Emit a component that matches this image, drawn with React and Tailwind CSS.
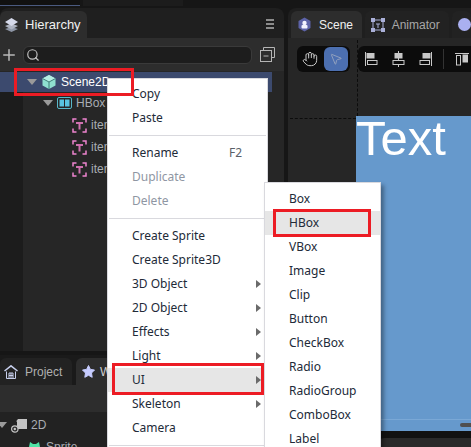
import React from 'react';
import { Hand, MousePointer2, Search, Plus } from 'lucide-react';

const uiFont = { fontFamily: '"Noto Sans", "Liberation Sans", sans-serif' };
const panelFont = { fontFamily: '"Liberation Sans", sans-serif' };

function Caret({ className = '' }) {
  return (
    <svg width="10" height="6" viewBox="0 0 10 6" className={`shrink-0 ${className}`}>
      <path d="M0 0h10L5 6z" fill="#9a9a9a" />
    </svg>
  );
}

function LayersIcon() {
  return (
    <svg width="15" height="15" viewBox="0 0 15 15">
      <path d="M7.5 10L14 12 7.5 15 1 12z" fill="#8d95a5" />
      <path d="M7.5 6.5L14 9 7.5 12.5 1 9z" fill="#aeb4c2" />
      <path d="M7.5 1L14 5 7.5 9 1 5z" fill="#d5d9ea" />
    </svg>
  );
}

function CubeIcon() {
  return (
    <svg width="16" height="16" viewBox="0 0 16 16">
      <path d="M8 1l6.500 3.500v7L8 15l-6.500-3.500v-7z" fill="#8fe0d0" />
      <path d="M8 8L1.500 4.500 8 1l6.500 3.500z" fill="#b6f0e4" />
      <path d="M8 8v7M8 8L1.500 4.500M8 8l6.500-3.500" stroke="#3f7f78" strokeWidth="1" fill="none" />
    </svg>
  );
}

function HBoxIcon() {
  return (
    <svg width="15" height="12" viewBox="0 0 15 12">
      <rect x="0.500" y="0.500" width="14" height="11" rx="1.500" fill="none" stroke="#58b7c9" />
      <rect x="2.500" y="2.500" width="4.500" height="7" fill="#58c4e0" />
      <rect x="8" y="2.500" width="4.500" height="7" fill="#58c4e0" />
    </svg>
  );
}

function TextItemIcon() {
  return (
    <svg width="15" height="15" viewBox="0 0 15 15" fill="none" stroke="#ee84cf" strokeWidth="1.500">
      <path d="M1 4.500V1h3.500M10.500 1H14v3.500M1 10.500V14h3.500M10.500 14H14v-3.500" />
      <path d="M4 5h7M7.500 5v6.500" strokeWidth="2" stroke="#d070b0" />
    </svg>
  );
}

function SceneTabIcon() {
  return (
    <svg width="15" height="15" viewBox="0 0 15 15">
      <path d="M7.500 0.500l6 3.500v7l-6 3.500-6-3.500v-7z" fill="#5d63a8" />
      <circle cx="7.500" cy="6" r="2.200" fill="#f2f2ff" />
      <rect x="4.500" y="8" width="6" height="3.500" rx="1" fill="#f2f2ff" />
    </svg>
  );
}

function AnimatorIcon() {
  return (
    <svg width="14" height="14" viewBox="0 0 14 14" fill="none" stroke="#aab0d8">
      <rect x="0.500" y="0.500" width="3" height="3" fill="#aab0d8" />
      <rect x="10.500" y="0.500" width="3" height="3" fill="#aab0d8" />
      <rect x="0.500" y="10.500" width="3" height="3" fill="#aab0d8" />
      <rect x="10.500" y="10.500" width="3" height="3" fill="#aab0d8" />
      <path d="M3.500 2h7M3.500 12h7M2 3.500v7M12 3.500v7M5 6h4M7 6v4" />
    </svg>
  );
}

function HomeIcon() {
  return (
    <svg width="14" height="14" viewBox="0 0 14 14" fill="none" stroke="#c8d0ee">
      <path d="M0.500 6L7 0.800 13.500 6" strokeWidth="1.500" />
      <path d="M2.500 6.500v7h9v-7" />
      <path d="M5 8h4v5.500H5zM7 8v5.500M5 10.500h4" />
    </svg>
  );
}

function StarIcon() {
  return (
    <svg width="13" height="13" viewBox="0 0 13 13">
      <path d="M6.500 0.500l1.900 3.900 4.100.6-3 3 .7 4.300-3.700-2-3.700 2 .7-4.300-3-3 4.100-.6z" fill="#c6ccff" strokeLinejoin="round" stroke="#c6ccff" />
    </svg>
  );
}

function FolderIcon() {
  return (
    <svg width="16" height="16" viewBox="0 0 16 16">
      <path d="M5 4.500L7 2h9v10H6V4.500z" fill="#c4c4c4" />
      <circle cx="3.800" cy="12" r="3.200" fill="#2a2a2a" stroke="#c4c4c4" strokeWidth="1.200" />
      <circle cx="3.800" cy="12" r="1.200" fill="#c4c4c4" />
    </svg>
  );
}

function SpriteIcon() {
  return (
    <svg width="15" height="12" viewBox="0 0 15 12">
      <path d="M1 11L3 1l3 2h3l3-2 2 10z" fill="#4fe3a5" />
    </svg>
  );
}

function CollapseIcon() {
  return (
    <svg width="15" height="15" viewBox="0 0 15 15" fill="none" stroke="#b5b5b5">
      <path d="M3.500 3.500v-3h11v10h-3" />
      <rect x="0.500" y="3.500" width="11" height="11" />
      <path d="M3.500 9h5" />
    </svg>
  );
}

function PanelMenuIcon() {
  return (
    <svg width="8" height="10" viewBox="0 0 8 10" fill="#8c8c8c">
      <rect width="8" height="2" />
      <rect y="4" width="8" height="2" />
      <rect y="8" width="8" height="2" />
    </svg>
  );
}

// alignment buttons in the scene toolbar
function AlignLeft() {
  return (
    <svg width="13" height="14" viewBox="0 0 13 14" fill="none" stroke="#c8c8c8">
      <path d="M0.500 0v14" />
      <rect x="2" y="1.500" width="7" height="4.500" fill="#c8c8c8" />
      <rect x="2.500" y="8.500" width="9.500" height="4" />
    </svg>
  );
}

function AlignCenter() {
  return (
    <svg width="13" height="16" viewBox="0 0 13 16" fill="none" stroke="#c8c8c8">
      <path d="M6.500 0v16" />
      <rect x="3" y="2.500" width="7" height="4.500" fill="#c8c8c8" />
      <rect x="1" y="9.500" width="11" height="4" fill="#0c0c0c" />
    </svg>
  );
}

function AlignRight() {
  return (
    <svg width="13" height="14" viewBox="0 0 13 14" fill="none" stroke="#c8c8c8">
      <path d="M12.500 0v14" />
      <rect x="4" y="1.500" width="7" height="4.500" fill="#c8c8c8" />
      <rect x="1" y="8.500" width="9.500" height="4" />
    </svg>
  );
}

function AlignTop() {
  return (
    <svg width="14" height="13" viewBox="0 0 14 13" fill="none" stroke="#c8c8c8">
      <path d="M0 0.500h14" />
      <rect x="1.500" y="2.500" width="4" height="9.500" />
      <rect x="8" y="2" width="4.500" height="7" fill="#c8c8c8" />
    </svg>
  );
}

function TreeRow({ icon, label, caret, className = '' }) {
  return (
    <div className={`flex h-[22px] shrink-0 items-center ${className}`} style={panelFont}>
      {caret && <Caret className="mr-[4px]" />}
      {icon}
      <span className="ml-[4px] text-[12px] text-[#a9adb3]">{label}</span>
    </div>
  );
}

function HierarchyPanel() {
  return (
    <div className="flex h-[343px] shrink-0 flex-col overflow-hidden rounded-t-lg bg-[#1f1f1f]" style={panelFont}>
      <div className="flex h-[30px] shrink-0 items-end">
        <div className="flex h-[27px] w-[87px] items-center gap-[6px] rounded-t-md bg-[#2d2d2d] pl-[4px]">
          <LayersIcon />
          <span className="text-[13px] text-[#f0f0f0]">Hierarchy</span>
        </div>
        <div className="mb-[9px] ml-auto mr-[10px]">
          <PanelMenuIcon />
        </div>
      </div>
      <div className="flex h-[33px] shrink-0 items-center bg-[#2d2d2d] pr-[9px]">
        <Plus size={18} color="#b8b8b8" strokeWidth={2} />
        <div className="ml-[5px] flex h-[18px] w-[229px] items-center rounded-md border border-[#3a3a3a] bg-[#1d1d1d] pl-[2px]">
          <Search size={14} color="#c4c4c4" strokeWidth={2} />
        </div>
        <div className="ml-auto">
          <CollapseIcon />
        </div>
      </div>
      <div className="flex min-h-0 flex-1 flex-col bg-[#262626]">
        <div className="mt-px flex h-[20px] w-[272px] shrink-0 items-center bg-[#3c4a6e] pl-[27px]">
          <Caret className="mr-[4px]" />
          <CubeIcon />
          <span className="ml-[4px] text-[12px] text-white">Scene2D</span>
        </div>
        <div className="flex flex-1">
          <div className="w-[23px] bg-[#1c1c1c]" />
          <div className="flex-1">
            <TreeRow caret icon={<HBoxIcon />} label="HBox" className="pl-[20px]" />
            <TreeRow icon={<TextItemIcon />} label="item0" className="pl-[49px]" />
            <TreeRow icon={<TextItemIcon />} label="item1" className="pl-[49px]" />
            <TreeRow icon={<TextItemIcon />} label="item2" className="pl-[49px]" />
          </div>
        </div>
      </div>
    </div>
  );
}

function WidgetsPanel() {
  return (
    <div className="mt-[4px] flex min-h-0 flex-1 flex-col overflow-hidden bg-[#1a1a1a]" style={panelFont}>
      <div className="flex h-[30px] shrink-0 items-end gap-[4px]">
        <div className="flex h-[27px] w-[72px] items-center gap-[7px] rounded-t-md bg-[#222222] pl-[4px]">
          <HomeIcon />
          <span className="text-[12px] text-[#b0b0b0]">Project</span>
        </div>
        <div className="flex h-[27px] flex-1 items-center gap-[5px] rounded-t-md bg-[#2d2d2d] pl-[6px]">
          <StarIcon />
          <span className="text-[12px] text-[#d0d0d0]">Widgets</span>
        </div>
      </div>
      <div className="h-[27px] shrink-0 bg-[#2d2d2d]" />
      <div className="min-h-0 flex-1 overflow-hidden bg-[#222222]">
        <TreeRow caret icon={<FolderIcon />} label="2D" className="-ml-[3px] mt-[2px]" />
        <TreeRow icon={<SpriteIcon />} label="Sprite" className="pl-[27px]" />
      </div>
    </div>
  );
}

function SceneTab({ icon, label, active, className = '' }) {
  return (
    <div
      className={`flex h-[27px] items-center gap-[7px] rounded-t-md pl-[6px] ${active ? 'bg-[#2d2d2d]' : 'bg-[#222222]'} ${className}`}
    >
      {icon}
      {label && <span className={`text-[12px] ${active ? 'text-[#f0f0f0]' : 'text-[#a8a8a8]'}`}>{label}</span>}
    </div>
  );
}

function ScenePanel() {
  return (
    <div className="flex min-w-0 flex-1 flex-col overflow-hidden rounded-tl-lg bg-[#1f1f1f]" style={panelFont}>
      <div className="flex h-[30px] shrink-0 items-end gap-[3px] pl-[3px]">
        <SceneTab active icon={<SceneTabIcon />} label="Scene" className="w-[72px]" />
        <SceneTab icon={<AnimatorIcon />} label="Animator" className="w-[86px]" />
        <SceneTab
          icon={<div className="h-[13px] w-[13px] rounded-full bg-[#aab0f0]" />}
          className="flex-1"
        />
      </div>
      <div className="relative min-h-0 flex-1 bg-[#262626]">
        {/* toolbars */}
        <div className="flex gap-[8px] pl-[9px] pt-[8px]">
          <div className="flex h-[26px] w-[53px] items-center rounded-md bg-[#0c0c0c] pl-[5px]">
            <Hand size={16} color="#c8c8c8" strokeWidth={1.500} />
            <div className="ml-[6px] flex h-[24px] w-[24px] items-center justify-center rounded-md bg-[#4c6fb0]">
              <MousePointer2 size={14} color="#9aa7c0" strokeWidth={1.500} />
            </div>
          </div>
          <div className="flex h-[26px] flex-1 items-center rounded-l-md bg-[#0c0c0c] pl-[7px]">
            <AlignLeft />
            <div className="ml-[14px]"><AlignCenter /></div>
            <div className="ml-[14px]"><AlignRight /></div>
            <div className="ml-[11px] h-[20px] w-px bg-[#333333]" />
            <div className="ml-[11px]"><AlignTop /></div>
          </div>
        </div>

        {/* canvas */}
        <div className="absolute left-[69px] top-[2px] h-[76px] border-l border-dashed border-[#0c0c0c]" />
        <div className="absolute left-[2px] top-[80px] w-[66px] border-t border-dashed border-[#0c0c0c]" />
        <div className="absolute left-[68px] top-[78px] h-[315px] w-[115px] bg-[#6699cc] text-[49px] leading-[44px] text-white">
          Text
        </div>
        <div className="absolute left-[68px] top-[381px] h-px w-[115px] bg-[#7aa8d6]" />
        <div className="absolute left-[172px] top-[385px] h-[4px] w-[11px] rounded-l-full bg-[#4f4f4f]" />
        <div className="absolute bottom-0 left-0 h-[16px] w-full bg-[#111111]" />
        <div className="absolute -bottom-px left-[90px] h-[10px] w-[100px] rounded-t-md bg-[#2a2a2a]" />
      </div>
    </div>
  );
}

function MenuItem({ label, hint, arrow, disabled, hover, className = '' }) {
  return (
    <div
      className={`relative flex h-[24px] items-center pl-[24px] text-[12px] ${hover ? 'bg-[#e6e6e6]' : ''} ${disabled ? 'text-[#8f96a3]' : 'text-[#222a38]'} ${className}`}
    >
      {label}
      {hint && <span className="absolute right-[25px] text-[#5a5f68]">{hint}</span>}
      {arrow && (
        <svg width="5" height="8" viewBox="0 0 5 8" className="absolute right-[6px]">
          <path d="M0 0l5 4-5 4z" fill="#6a6a6a" />
        </svg>
      )}
    </div>
  );
}

function Separator() {
  return (
    <div className="flex h-[11px] items-center px-px">
      <div className="h-px w-full bg-[#d9d9de]" />
    </div>
  );
}

function ContextMenu() {
  return (
    <div className="absolute left-[107px] top-[78px] w-[161px] border border-[#d9d9de] bg-white pb-[8px] pt-[3px]">
      <MenuItem label="Copy" />
      <MenuItem label="Paste" />
      <Separator />
      <MenuItem label="Rename" hint="F2" />
      <MenuItem label="Duplicate" disabled />
      <MenuItem label="Delete" disabled />
      <Separator />
      <MenuItem label="Create Sprite" />
      <MenuItem label="Create Sprite3D" />
      <MenuItem label="3D Object" arrow />
      <MenuItem label="2D Object" arrow />
      <MenuItem label="Effects" arrow />
      <MenuItem label="Light" arrow />
      <MenuItem label="UI" arrow hover />
      <MenuItem label="Skeleton" arrow />
      <MenuItem label="Camera" />
      <Separator />
    </div>
  );
}

function SubMenu() {
  const items = ['Box', 'HBox', 'VBox', 'Image', 'Clip', 'Button', 'CheckBox', 'Radio', 'RadioGroup', 'ComboBox', 'Label'];
  return (
    <div className="absolute left-[264px] top-[182px] w-[117px] border border-[#d9d9de] bg-white pb-[8px] pt-[4px] shadow-[3px_3px_4px_rgba(0,0,0,0.35)]">
      {items.map((name) => (
        <MenuItem key={name} label={name} hover={name === 'HBox'} />
      ))}
    </div>
  );
}

export default function App() {
  return (
    <div className="relative h-[447px] w-[471px] overflow-hidden bg-[#161616]" style={uiFont}>
      <div className="flex h-[8px] gap-[3px]">
        <div className="h-[6px] w-[80px] border-b border-[#4a5a80] bg-[#111111]" />
        <div className="h-[6px] w-[100px] bg-[#1c1c1c]" />
      </div>
      <div className="flex h-[439px] gap-[4px]">
        <div className="flex w-[284px] shrink-0 flex-col">
          <HierarchyPanel />
          <WidgetsPanel />
        </div>
        <ScenePanel />
      </div>

      <ContextMenu />
      <SubMenu />

      {/* red callouts drawn over the screenshot */}
      <div className="absolute left-[14px] top-[68px] h-[28px] w-[120px] border-[3px] border-[#ec1c24]" />
      <div className="absolute left-[112px] top-[363px] h-[32px] w-[152px] border-[3px] border-[#ec1c24]" />
      <div className="absolute left-[273px] top-[209px] h-[28px] w-[98px] border-[3px] border-[#ec1c24]" />
    </div>
  );
}
